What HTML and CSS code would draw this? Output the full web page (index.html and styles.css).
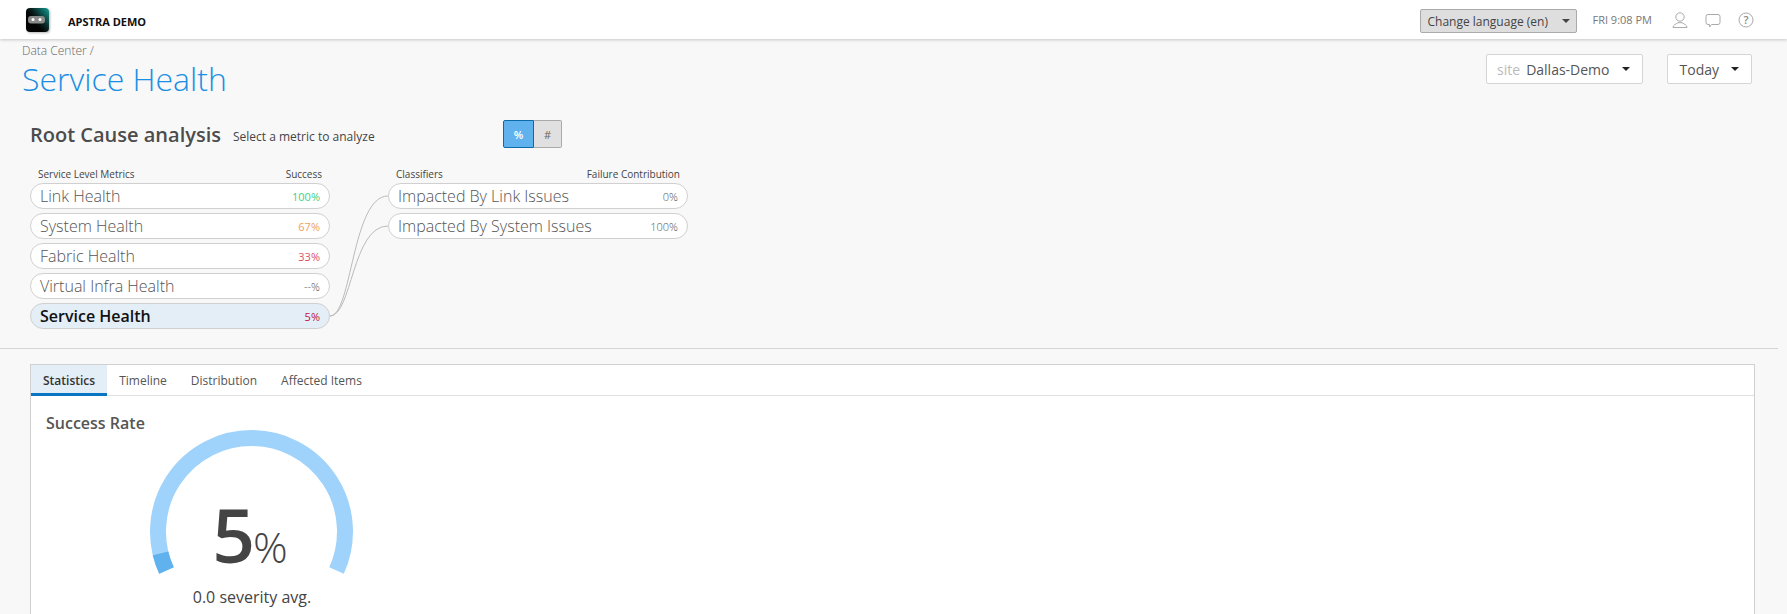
FILE: index.html
```html
<!DOCTYPE html>
<html lang="en">
<head>
    <meta charset="UTF-8">
    <title>Service Health</title>
    <link rel="stylesheet" href="styles.css">
</head>
<body>
    <header class="topbar">
        <div class="brand">
            <svg class="logo" width="26" height="26" viewBox="0 0 26 26">
                <defs>
                    <linearGradient id="logo-fill" x1="1" y1="0" x2="0.35" y2="0.55">
                        <stop offset="0" stop-color="#12a096"/>
                        <stop offset="0.7" stop-color="#0a2422"/>
                        <stop offset="1" stop-color="#030303"/>
                    </linearGradient>
                </defs>
                <rect x="1" y="1" width="23" height="24" rx="4" fill="url(#logo-fill)"/>
                <rect x="3" y="9" width="17" height="7.500" rx="3" fill="#8a8a8a"/>
                <circle cx="8" cy="12.500" r="1.500" fill="#fff"/>
                <circle cx="15" cy="12.500" r="1.500" fill="#fff"/>
            </svg>
            <span class="brand-name">APSTRA DEMO</span>
        </div>
        <div class="top-right">
            <div class="lang-select">Change language (en)<span class="caret"></span></div>
            <span class="clock">FRI 9:08 PM</span>
            <svg class="top-icon" width="16" height="16" viewBox="0 0 16 16">
                <circle cx="8" cy="5" r="4.200"/>
                <path d="M1 15.500c0-2.500 3-3.500 5-4.800h4c2 1.300 5 2.300 5 4.800z"/>
            </svg>
            <svg class="top-icon" width="16" height="16" viewBox="0 0 16 16">
                <path d="M3 2.500h10a2 2 0 0 1 2 2v6a2 2 0 0 1-2 2h-6.500l-2 2.500v-2.500h-1.500a2 2 0 0 1-2-2v-6a2 2 0 0 1 2-2z"/>
            </svg>
            <svg class="top-icon" width="16" height="16" viewBox="0 0 16 16">
                <circle cx="8" cy="8" r="7"/>
                <text x="8" y="12" class="help-mark">?</text>
            </svg>
        </div>
    </header>

    <div class="page-head">
        <div>
            <div class="crumb">Data Center /</div>
            <h1 class="page-title">Service Health</h1>
        </div>
        <div class="page-filters">
            <div class="filter"><span class="filter-label">site</span>Dallas-Demo<span class="caret"></span></div>
            <div class="filter">Today<span class="caret"></span></div>
        </div>
    </div>

    <section class="analysis">
        <div class="analysis-head">
            <h2>Root Cause analysis</h2>
            <span class="hint">Select a metric to analyze</span>
            <div class="toggle">
                <button class="toggle-on">%</button>
                <button class="toggle-off">#</button>
            </div>
        </div>

        <div class="columns">
            <div class="metric-col">
                <div class="col-head"><span>Service Level Metrics</span><span>Success</span></div>
                <div class="pill"><span>Link Health</span><span class="val good">100%</span></div>
                <div class="pill"><span>System Health</span><span class="val warn">67%</span></div>
                <div class="pill"><span>Fabric Health</span><span class="val bad">33%</span></div>
                <div class="pill"><span>Virtual Infra Health</span><span class="val">--%</span></div>
                <div class="pill pill-active"><span>Service Health</span><span class="val crit">5%</span></div>
            </div>
            <svg class="links" width="58" height="160" viewBox="0 0 58 160">
                <path d="M0 150C22 150 22 30 58 30"/>
                <path d="M0 150C22 150 22 60 58 60"/>
            </svg>
            <div class="metric-col">
                <div class="col-head"><span>Classifiers</span><span>Failure Contribution</span></div>
                <div class="pill"><span>Impacted By Link Issues</span><span class="val">0%</span></div>
                <div class="pill"><span>Impacted By System Issues</span><span class="val">100%</span></div>
            </div>
        </div>
    </section>

    <hr class="divider">

    <section class="panel">
        <nav class="tabs">
            <a class="tab tab-on">Statistics</a>
            <a class="tab">Timeline</a>
            <a class="tab">Distribution</a>
            <a class="tab">Affected Items</a>
        </nav>
        <div class="panel-body">
            <h3>Success Rate</h3>
            <div class="gauge">
                <svg width="204" height="146" viewBox="0 0 204 146">
                    <path class="gauge-track" d="M16.500 140.500A93.500 93.500 0 1 1 186.500 140.500"/>
                    <path class="gauge-fill" d="M16.500 140.500A93.500 93.500 0 0 1 10.500 123.300"/>
                </svg>
                <div class="gauge-num">5<span>%</span></div>
            </div>
            <div class="severity">0.0 severity avg.</div>
        </div>
    </section>
</body>
</html>
```

FILE: styles.css
```css
* {
    box-sizing: border-box;
}

html, body {
    height: 614px;
    overflow: hidden;
}

body {
    font-family: "Open Sans", sans-serif;
    margin: 0;
    background-color: #f8f8f8;
    color: #444;
}

/* Top bar */
.topbar {
    height: 39px;
    background: #fff;
    box-shadow: 0 1px 3px rgba(0, 0, 0, 0.2);
    display: flex;
    justify-content: space-between;
    align-items: center;
    padding: 0 33px 0 25px;
}

.brand {
    display: flex;
    align-items: center;
    gap: 17px;
}

.logo {
    filter: drop-shadow(1px 1px 1px rgba(0, 0, 0, 0.3));
}

.brand-name {
    font-size: 11px;
    font-weight: 700;
    color: #111;
    padding-top: 3px;
}

.top-right {
    display: flex;
    align-items: center;
}

.lang-select {
    width: 157px;
    height: 24px;
    margin: 3px 15px 0 0;
    background: #dedede;
    border: 1px solid #aaa;
    border-radius: 2px;
    font-size: 12px;
    padding: 0 6px;
    display: flex;
    align-items: center;
    justify-content: space-between;
}

.clock {
    font-size: 11px;
    color: #777;
    margin-right: 20px;
}

.top-icon {
    fill: none;
    stroke: #aaa;
    stroke-width: 1;
    margin-left: 17px;
}

.clock + .top-icon {
    margin-left: 0;
}

.help-mark {
    font-size: 11px;
    font-weight: 600;
    text-anchor: middle;
    fill: #888;
    stroke: none;
}

.caret {
    width: 0;
    height: 0;
    border-left: 4px solid transparent;
    border-right: 4px solid transparent;
    border-top: 4px solid #444;
}

/* Page heading */
.page-head {
    display: flex;
    justify-content: space-between;
    padding: 4px 35px 0 22px;
    height: 80px;
}

.crumb {
    font-size: 12px;
    font-weight: 300;
    line-height: 16px;
    color: #666;
}

.page-title {
    font-size: 32px;
    font-weight: 300;
    line-height: 44px;
    margin: -2px 0 0;
    color: #1a8fe3;
}

.page-filters {
    display: flex;
    gap: 24px;
    padding-top: 11px;
}

.filter {
    height: 30px;
    padding: 0 12px;
    background: #fff;
    border: 1px solid #d5d5d5;
    border-radius: 2px;
    font-size: 14px;
    color: #555;
    display: flex;
    align-items: center;
}

.filter .caret {
    margin-left: 12px;
    border-top-color: #222;
}

.filter-label {
    color: #bbb;
    margin: 0 6px 0 -2px;
}

/* Root cause */
.analysis {
    padding: 0 30px;
    height: 229px;
}

.analysis-head {
    display: flex;
    align-items: center;
    height: 30px;
}

.analysis-head h2 {
    font-size: 20px;
    font-weight: 600;
    margin: 0 12px 0 0;
    color: #4c4c4c;
}

.hint {
    font-size: 12px;
    width: 270px;
    padding-top: 5px;
}

.toggle {
    display: flex;
}

.toggle button {
    height: 28px;
    padding: 0;
    font-family: inherit;
    font-size: 11px;
    font-weight: 600;
}

.toggle-on {
    width: 31px;
    background: #5fb2ee;
    color: #fff;
    border: 1px solid #0b6aa8;
    border-radius: 2px 0 0 2px;
}

.toggle .toggle-off {
    width: 28px;
    background: #e0e0e0;
    color: #666;
    font-weight: 400;
    border: 1px solid #aaa;
    border-left: 0;
    border-radius: 0 2px 2px 0;
}

.columns {
    display: flex;
    margin-top: 17px;
}

.metric-col {
    width: 300px;
}

.col-head {
    display: flex;
    justify-content: space-between;
    font-size: 10px;
    line-height: 16px;
    padding: 0 8px;
    height: 17px;
}

.pill {
    height: 26px;
    margin-bottom: 4px;
    background: #fff;
    border: 1px solid #d0d0d0;
    border-radius: 13px;
    display: flex;
    justify-content: space-between;
    align-items: center;
    padding: 0 9px;
    font-size: 16px;
    font-weight: 300;
    color: #555;
}

.pill-active {
    background: #e3eef7;
    font-weight: 600;
    color: #111;
}

.val {
    font-size: 11px;
    font-weight: 300;
    color: #555;
}

.val.good { color: #3fcf7f; font-weight: 400; }
.val.warn { color: #f0a060; font-weight: 400; }
.val.bad { color: #e0506a; font-weight: 400; }
.val.crit { color: #c0143c; font-weight: 400; }

.links {
    fill: none;
    stroke: #bbb;
    stroke-width: 1;
}

.divider {
    margin: 0 9px 0 0;
    border: 0;
    border-top: 1px solid #d5d5d5;
}

/* Statistics panel */
.panel {
    margin: 15px 32px 0 30px;
    background: #fff;
    border: 1px solid #d0d0d0;
    border-bottom: 0;
    height: 250px;
}

.tabs {
    display: flex;
    height: 31px;
    border-bottom: 1px solid #e0e0e0;
}

.tab {
    font-size: 12px;
    padding: 7px 12px 0;
    color: #555;
}

.tab-on {
    background: #e3eef7;
    border-bottom: 3px solid #0a75c2;
    font-weight: 600;
    color: #333;
    height: 31px;
}

.panel-body {
    padding: 0 15px;
}

.panel-body h3 {
    font-size: 16px;
    font-weight: 600;
    line-height: 22px;
    margin: 16px 0 0;
    color: #555;
}

.gauge {
    position: relative;
    width: 204px;
    margin: -4px 0 0 104px;
}

.gauge svg {
    display: block;
}

.gauge-track, .gauge-fill {
    fill: none;
    stroke-width: 16;
}

.gauge-track {
    stroke: #a0d3fb;
}

.gauge-fill {
    stroke: #5fb2ee;
}

.gauge-num {
    position: absolute;
    left: 0;
    right: 4px;
    top: 64px;
    text-align: center;
    font-size: 75px;
    font-weight: 600;
    line-height: 80px;
}

.gauge-num span {
    font-size: 43px;
    font-weight: 300;
    margin-left: -2px;
}

.severity {
    width: 204px;
    margin: 10px 0 0 104px;
    text-align: center;
    font-size: 16px;
    line-height: 22px;
}
```
